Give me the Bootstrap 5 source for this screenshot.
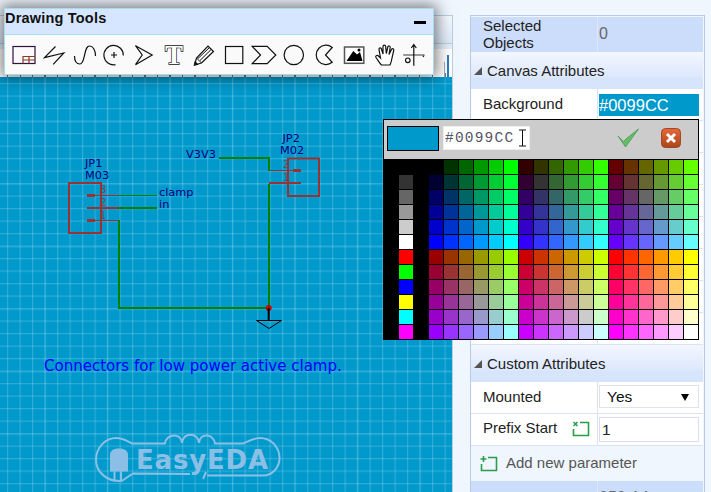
<!DOCTYPE html>
<html lang="en">

<head>
    <meta charset="UTF-8">
    <meta name="viewport" content="width=device-width, initial-scale=1.0">
    <title>EasyEDA - Drawing Tools</title>
    <link href="https://cdn.jsdelivr.net/npm/bootstrap@5.3.3/dist/css/bootstrap.min.css" rel="stylesheet">
    <script src="https://cdn.jsdelivr.net/npm/bootstrap@5.3.3/dist/js/bootstrap.bundle.min.js"></script>
    <style>
        html, body {
            height: 492px;
            overflow: hidden;
        }

        body {
            background-color: #eff6fe;
            font-family: "Liberation Sans", Arial, sans-serif;
            font-size: 15px;
            color: #222;
        }

        .app-root {
            width: 711px;
            height: 492px;
        }

        .left-col {
            width: 453px;
            height: 492px;
        }

        .top-gap { height: 15px; }

        .tab-strip {
            height: 29px;
            background: linear-gradient(#f4f8fe, #dce9f8);
            border: 1px solid #b7cfe3;
            border-left: 0;
        }

        .ruler-strip {
            height: 33px;
            position: relative;
            border-right: 1px solid #b7cfe3;
            background-color: #fff;
            background-image:
                linear-gradient(#e3edf8 5px, transparent 5px),
                repeating-linear-gradient(90deg, #777 0 1px, transparent 1px 12.5px);
            background-size: 100% 100%, 100% 4px;
            background-position: 0 0, 7px bottom;
            background-repeat: no-repeat;
        }

        .ruler-mark {
            position: absolute;
            bottom: 0;
            width: 2px;
            height: 22px;
            left: 447px;
            background: #2b7cc9;
        }

        .ruler-mark-grey {
            left: 444px;
            width: 1px;
            height: 15px;
            background: #aaa;
        }

        .sch-canvas {
            height: 415px;
            background-color: #0099cc;
            background-image:
                linear-gradient(90deg, rgba(255, 255, 255, .06) 2px, transparent 2px),
                linear-gradient(rgba(255, 255, 255, .06) 2px, transparent 2px),
                linear-gradient(90deg, rgba(255, 255, 255, .18) 1px, rgba(255, 255, 255, .05) 1px, rgba(255, 255, 255, .05) 2px, transparent 2px),
                linear-gradient(rgba(255, 255, 255, .18) 1px, rgba(255, 255, 255, .05) 1px, rgba(255, 255, 255, .05) 2px, transparent 2px);
            background-size: 62.5px 62.5px, 62.5px 62.5px, 12.5px 12.5px, 12.5px 12.5px;
            background-position: 44px 44px, 44px 44px, 7px 6px, 7px 6px;
            border-right: 1px solid #b7cfe3;
        }

        .sch-svg {
            position: absolute;
            inset: 0;
        }

        .sch-label {
            font-family: "DejaVu Sans", sans-serif;
            font-size: 11.3px;
            fill: #000080;
        }

        .sch-pin {
            font-family: "DejaVu Sans", sans-serif;
            font-size: 10px;
            fill: #993333;
            opacity: .8;
        }

        .sch-note {
            font-family: "DejaVu Sans", sans-serif;
            font-size: 15px;
            fill: #0000ff;
        }

        .logo-word {
            font-family: "DejaVu Sans", sans-serif;
            font-weight: 700;
            font-size: 26px;
            fill: #8cbfe6;
        }

        .tool-window {
            position: absolute;
            left: 4px;
            top: 8px;
            width: 430px;
            height: 67px;
            border: 1px solid #a8dcec;
            box-shadow: 0 0 14px 3px rgba(0, 0, 0, .5);
            background: #fafafa;
        }

        .tool-head {
            height: 26px;
            background: #d6e6ff;
            border-bottom: 1px solid #a8dcec;
            font-weight: 700;
            font-size: 14.5px;
            letter-spacing: .2px;
            line-height: 18px;
            color: #111;
        }

        .tool-min {
            width: 12px;
            height: 3px;
            background: #000;
            margin: 12px 7px 0 0;
        }

        .tool-body {
            padding: 5px 0 0 3.5px;
        }

        .tool-body svg {
            width: 30px;
            height: 30px;
            flex: none;
            fill: none;
            stroke: #111;
            stroke-width: 1.2;
        }

        .tool-t {
            font-family: "Liberation Serif", serif;
            font-weight: 700;
            font-size: 27px;
            fill: #fff;
            stroke: #111;
            stroke-width: 1.4;
            paint-order: stroke;
        }

        .attr-panel {
            width: 235px;
            height: 477px;
            margin: 15px 0 0 17px;
            border: 1px solid #b5cbe8;
            border-bottom: 0;
            padding: 1px 1px 0 0;
        }

        .attr-row {
            width: 232px;
            height: 32px;
            background: #fff;
            border-bottom: 1px solid #dbe4f5;
        }

        .attr-name {
            width: 127px;
            flex: none;
            border-right: 1px solid #dbe4f5;
            padding-left: 12px;
            display: flex;
            align-items: center;
        }

        .attr-val {
            flex: 1;
            padding: 0 4px 0 1px;
            display: flex;
            align-items: center;
            min-width: 0;
        }

        .attr-blue {
            height: 35px;
            background: #ccdcfb;
            border: 0;
            line-height: 17px;
        }

        .attr-blue .attr-name,
        .attr-blue .attr-val {
            border-color: #dfe8fb;
            padding-bottom: 2px;
        }

        .attr-count {
            color: #666;
            font-size: 16px;
            padding-left: 1px;
        }

        .attr-section {
            width: 232px;
            height: 37px;
            background: linear-gradient(#f3f7fe 0, #dbe7fc 26px, #d7e5fc 26px);
            padding: 1px 0 0 3px;
            line-height: 18px;
        }

        .attr-section svg {
            width: 8px;
            height: 8px;
            margin-right: 5px;
            fill: #555;
        }

        .bg-value {
            width: 100px;
            height: 22px;
            background: #0099cc;
            color: #fff;
            font-size: 16.5px;
            line-height: 22px;
        }

        .val-select.form-select {
            width: 100px;
            height: 23px;
            margin-bottom: 2px;
            padding: 0 0 0 7px;
            font-size: 15.5px;
            line-height: 21px;
            border: 1px solid #e2e2e2;
            border-radius: 0;
            color: #111;
            background-position: right 9px center;
            background-size: 8px 8px;
            background-image: url("data:image/svg+xml,%3csvg xmlns='http://www.w3.org/2000/svg' viewBox='0 0 8 8'%3e%3cpath d='M0 1h8L4 8z'/%3e%3c/svg%3e");
        }

        .val-input.form-control {
            width: 100px;
            height: 25px;
            padding: 0 0 0 2px;
            font-size: 15.5px;
            border: 1px solid #dcdcf5;
            border-radius: 0;
            color: #222;
        }

        .add-param {
            height: 35px;
            color: #555;
            padding-left: 9px;
            width: 232px;
        }

        .add-param svg,
        .prefix-ic {
            width: 18px;
            height: 17px;
            fill: none;
            stroke: #2a9d4b;
            stroke-width: 1.6;
        }

        .add-param svg { margin-right: 8px; }

        .prefix-ic { margin-left: 15px; }

        .prefix-label { padding-bottom: 2px; }

        .color-picker {
            position: absolute;
            left: 383px;
            top: 119px;
            width: 316px;
            height: 221px;
            border: 1px solid #000;
            background: #000;
        }

        .picker-head {
            height: 39px;
            background: #ccc;
            padding: 6px 0 0 3px;
            margin-bottom: 1px;
        }

        .picker-swatch {
            width: 52px;
            height: 25px;
            background: #0099cc;
            border: 1px solid #000;
        }

        .picker-hex {
            width: 87px;
            height: 24px;
            margin-left: 4px;
            background: #fff;
            border: 1px solid #eee;
            font-family: "Liberation Mono", monospace;
            font-size: 14.5px;
            letter-spacing: 1.2px;
            line-height: 22px;
            padding-left: 1px;
            color: #556;
        }

        .picker-hex svg {
            width: 9px;
            height: 18px;
            margin: 2px 0 0 4px;
            vertical-align: top;
            stroke: #111;
            fill: none;
        }

        .picker-ok {
            width: 22px;
            height: 20px;
            margin: 2px 0 0 87px;
        }

        .picker-no {
            width: 20px;
            height: 20px;
            margin: 2px 0 0 22px;
        }

        .picker-grid {
            display: grid;
            grid-template-columns: repeat(21, 14px);
            grid-auto-rows: 14px;
            gap: 1px;
        }
    </style>
</head>

<body>
    <div class="app-root position-relative d-flex">
        <div class="left-col flex-shrink-0">
            <div class="top-gap"></div>
            <div class="tab-strip"></div>
            <div class="ruler-strip">
                <div class="ruler-mark"></div>
                <div class="ruler-mark ruler-mark-grey"></div>
            </div>
            <div class="sch-canvas position-relative">
                <svg class="sch-svg" width="453" height="415" viewBox="0 77 453 415">
                    <!-- JP1 -->
                    <rect x="69" y="183" width="32" height="50" fill="none" stroke="#993333" stroke-width="2" />
                    <path d="M87 195.500h8M87 220.500h8" stroke="#993333" stroke-width="3" />
                    <path d="M95 195.500h24M95 220.500h24" stroke="#993333" />
                    <path d="M87 208h32" stroke="#993333" stroke-width="2" />
                    <text class="sch-pin" x="100" y="193">3</text>
                    <text class="sch-pin" x="100" y="206">2</text>
                    <text class="sch-pin" x="100" y="219">1</text>
                    <text class="sch-label" x="85" y="167">JP1</text>
                    <text class="sch-label" x="85" y="179">M03</text>
                    <!-- JP2 -->
                    <rect x="288" y="158.500" width="31" height="37.500" fill="none" stroke="#993333" stroke-width="2" />
                    <path d="M293 170.500h8" stroke="#993333" stroke-width="3" />
                    <path d="M269 170.500h24" stroke="#993333" />
                    <path d="M269 183h32" stroke="#993333" stroke-width="2" />
                    <text class="sch-pin" x="283" y="168">2</text>
                    <text class="sch-pin" x="283" y="181">1</text>
                    <text class="sch-label" x="282.500" y="142">JP2</text>
                    <text class="sch-label" x="280" y="154">M02</text>
                    <!-- nets -->
                    <path d="M119 195.500h38" stroke="#008000" />
                    <path d="M119 208h38M119 220v88h150M219 158h50v13M269 184v124" fill="none" stroke="#008000" stroke-width="2" />
                    <circle cx="268.700" cy="308" r="3" fill="#cc0000" />
                    <path d="M268.700 308v12" stroke="#000" stroke-width="2" />
                    <path d="M256.500 320.500h25l-12.500 8z" fill="none" stroke="#000" />
                    <text class="sch-label" x="159" y="196">clamp</text>
                    <text class="sch-label" x="159" y="208">in</text>
                    <text class="sch-label" x="186" y="158">V3V3</text>
                    <text class="sch-note" x="44" y="371">Connectors for low power active clamp.</text>
                    <!-- logo -->
                    <path d="M121.700 481C107 482 96 472 96 460C96 447 106 438 116 438C123 438 127 441 132 443.500H165C166 434 181 432 182 443C183 432 198 432 199 443C200 432 214 434 215 443.500H243C249 441 254 438 260 438C271 438 279.500 447 279.500 458C279.500 468 272 475.500 263 475.500H207M190 474L133 473.500L121.700 481" fill="none" stroke="#8cbfe6" stroke-width="2" />
                    <path d="M110 471.500V455C110 451 113 448.500 119 448.500C125 448.500 128 451 128 455V471.500Z" fill="#8cbfe6" />
                    <path d="M114.500 471v10M121 471v10" stroke="#8cbfe6" stroke-width="2" />
                    <path d="M206 472l-3 7" stroke="#8cbfe6" stroke-width="2" />
                    <text class="logo-word" x="136" y="469" textLength="132">EasyEDA</text>
                </svg>
            </div>
        </div>

        <div class="attr-panel flex-shrink-0">
            <div class="attr-row attr-blue d-flex">
                <div class="attr-name">Selected<br>Objects</div>
                <div class="attr-val attr-count">0</div>
            </div>
            <div class="attr-section d-flex align-items-center">
                <svg viewBox="0 0 8 8"><path d="M8 0v8H0z" /></svg>Canvas Attributes
            </div>
            <div class="attr-row d-flex">
                <div class="attr-name">Background</div>
                <div class="attr-val"><div class="bg-value">#0099CC</div></div>
            </div>
            <div class="attr-row d-flex"><div class="attr-name"></div><div class="attr-val"></div></div>
            <div class="attr-row d-flex"><div class="attr-name"></div><div class="attr-val"></div></div>
            <div class="attr-row d-flex"><div class="attr-name"></div><div class="attr-val"></div></div>
            <div class="attr-row d-flex"><div class="attr-name"></div><div class="attr-val"></div></div>
            <div class="attr-row d-flex"><div class="attr-name"></div><div class="attr-val"></div></div>
            <div class="attr-row d-flex"><div class="attr-name"></div><div class="attr-val"></div></div>
            <div class="attr-row d-flex"><div class="attr-name"></div><div class="attr-val"></div></div>
            <div class="attr-section d-flex align-items-center">
                <svg viewBox="0 0 8 8"><path d="M8 0v8H0z" /></svg>Custom Attributes
            </div>
            <div class="attr-row d-flex">
                <div class="attr-name">Mounted</div>
                <div class="attr-val">
                    <select class="form-select val-select"><option>Yes</option></select>
                </div>
            </div>
            <div class="attr-row d-flex">
                <div class="attr-name prefix-label">Prefix Start
                    <svg class="prefix-ic" viewBox="0 0 18 17"><path d="M8 2.500h8.500v13H1.500V9M1.500 2l4 4M5.500 2l-4 4" /></svg>
                </div>
                <div class="attr-val"><input class="form-control val-input" value="1"></div>
            </div>
            <div class="add-param d-flex align-items-center">
                <svg viewBox="0 0 18 17"><path d="M8 2.500h8.500v13H1.500V9M3.500 1v6M.5 4h6" /></svg>Add new parameter
            </div>
            <div class="attr-row attr-blue d-flex">
                <div class="attr-name">Library Name</div>
                <div class="attr-val attr-count">050-14</div>
            </div>
        </div>

        <div class="tool-window">
            <div class="tool-head d-flex justify-content-between">
                <span>Drawing Tools</span>
                <div class="tool-min"></div>
            </div>
            <div class="tool-body d-flex">
                <svg viewBox="8.500 41 30 30">
                    <rect x="12.500" y="47.500" width="22" height="17" stroke="#301040" />
                    <path d="M22.500 64.500v-7h12M22.500 61h12M28.500 57.500v7" stroke="#8a3b20" />
                </svg>
                <svg viewBox="38.500 41 30 30"><path d="M55 47.500L44 58.700L63.300 54L52.700 65.300" /></svg>
                <svg viewBox="68.500 41 30 30"><path d="M74 57C74 62 76 65 79.500 65C85 65 83 47 89 47C92.500 47 95 51 95 57" /></svg>
                <svg viewBox="98.500 41 30 30">
                    <path d="M122.800 56.500A9.700 9.700 0 1 0 115 65.600" />
                    <path d="M113.500 53v6M110.500 56h6" />
                </svg>
                <svg viewBox="128.500 41 30 30"><path d="M135 46.700L151.700 56L135 65.700L141.700 56Z" /></svg>
                <svg viewBox="158.500 41 30 30">
                    <text class="tool-t" x="173.500" y="65" text-anchor="middle">T</text>
                </svg>
                <svg viewBox="188.500 41 30 30">
                    <path d="M194 66L196 59L207.500 47L213 52.500L201 64Z" />
                    <path d="M197.500 59.500L209 48.500M199.500 61.500L210.800 50.300M196 59L201 64" stroke-width="1" />
                    <path d="M194 66L194.700 63L197 65.300Z" fill="#111" />
                </svg>
                <svg viewBox="218.500 41 30 30"><rect x="225" y="47.500" width="17.300" height="17" /></svg>
                <svg viewBox="248.500 41 30 30"><path d="M251.700 47.300H266.700L275.300 56L266.700 64.700H251.700L260 56Z" /></svg>
                <svg viewBox="278.500 41 30 30"><circle cx="293.300" cy="56" r="9.700" /></svg>
                <svg viewBox="308.500 41 30 30"><path d="M331.700 48.500A9.700 9.700 0 1 0 331.700 63.300L325 56Z" /></svg>
                <svg viewBox="338.500 41 30 30">
                    <rect x="344" y="48" width="19.300" height="16.300" stroke="#555" stroke-width="1.500" fill="#fff" />
                    <path d="M346 62L352.800 52L356.500 55.500L359.500 53L362 62Z" fill="#000" stroke="none" />
                    <circle cx="358.500" cy="51" r="1.500" fill="#000" stroke="none" />
                </svg>
                <svg viewBox="368.500 41 30 30">
                    <path d="M381 66C379 64 378 62 375.500 58.500C374.500 57 376.500 55.500 378 57L380 59L378.500 50.500C378.300 48.700 380.500 48.300 381 50L382.500 55L382.500 47.500C382.500 45.700 385 45.700 385.200 47.500L385.800 54.500L387.300 48C387.700 46.300 390 46.800 389.700 48.500L388.500 55.500L391 50.500C391.800 49 393.800 49.800 393.200 51.500L391.500 59C391 62 390.500 64 389.500 66Z" fill="#fff" />
                </svg>
                <svg viewBox="398.500 41 30 30">
                    <path d="M402.700 56H424" stroke="#777" stroke-width="1.500" />
                    <path d="M413.300 46v20.700M410.800 49l2.500-3.500 2.500 3.500" />
                    <circle cx="407.300" cy="61.300" r="2.300" />
                    <path d="M422.500 58l1-1.500" />
                </svg>
            </div>
        </div>

        <div class="color-picker">
            <div class="picker-head d-flex">
                <div class="picker-swatch"></div>
                <div class="picker-hex">#0099CC<svg viewBox="0 0 9 18"><path d="M1 1h7M4.500 1v16M1 17h7" /></svg></div>
                <svg class="picker-ok" viewBox="0 0 22 20">
                    <path d="M1 8L8.500 19L21.500 1L9.500 10.500L6.500 13.500Z" fill="#63bd63" stroke="#4a9a55" stroke-width=".8" />
                </svg>
                <svg class="picker-no" viewBox="0 0 20 20">
                    <defs>
                        <linearGradient id="noFill" x1="0" y1="0" x2="0" y2="1">
                            <stop offset="0" stop-color="#e8673a" />
                            <stop offset="1" stop-color="#a84618" />
                        </linearGradient>
                    </defs>
                    <rect x=".5" y=".5" width="19" height="19" rx="4" fill="url(#noFill)" stroke="#a04a25" />
                    <path d="M6 6l8 8M14 6l-8 8" stroke="#fff" stroke-width="3" />
                </svg>
            </div>
            <div class="picker-grid" id="palette"></div>
        </div>
    </div>
    <script>
        const steps = ["00", "33", "66", "99", "cc", "ff"];
        const side = ["000", "333", "666", "999", "ccc", "fff", "f00", "0f0", "00f", "ff0", "0ff", "f0f"];
        const palette = document.getElementById("palette");

        for (let r = 0; r < 12; r++) {
            for (let c = 0; c < 21; c++) {
                let color = "#000";
                if (c === 1) color = "#" + side[r];
                if (c >= 3) {
                    const block = Math.floor((c - 3) / 6);
                    const red = r < 6 ? block : block + 3;
                    color = "#" + steps[red] + steps[(c - 3) % 6] + steps[r % 6];
                }
                const cell = document.createElement("div");
                cell.style.background = color;
                palette.appendChild(cell);
            }
        }
    </script>
</body>

</html>
